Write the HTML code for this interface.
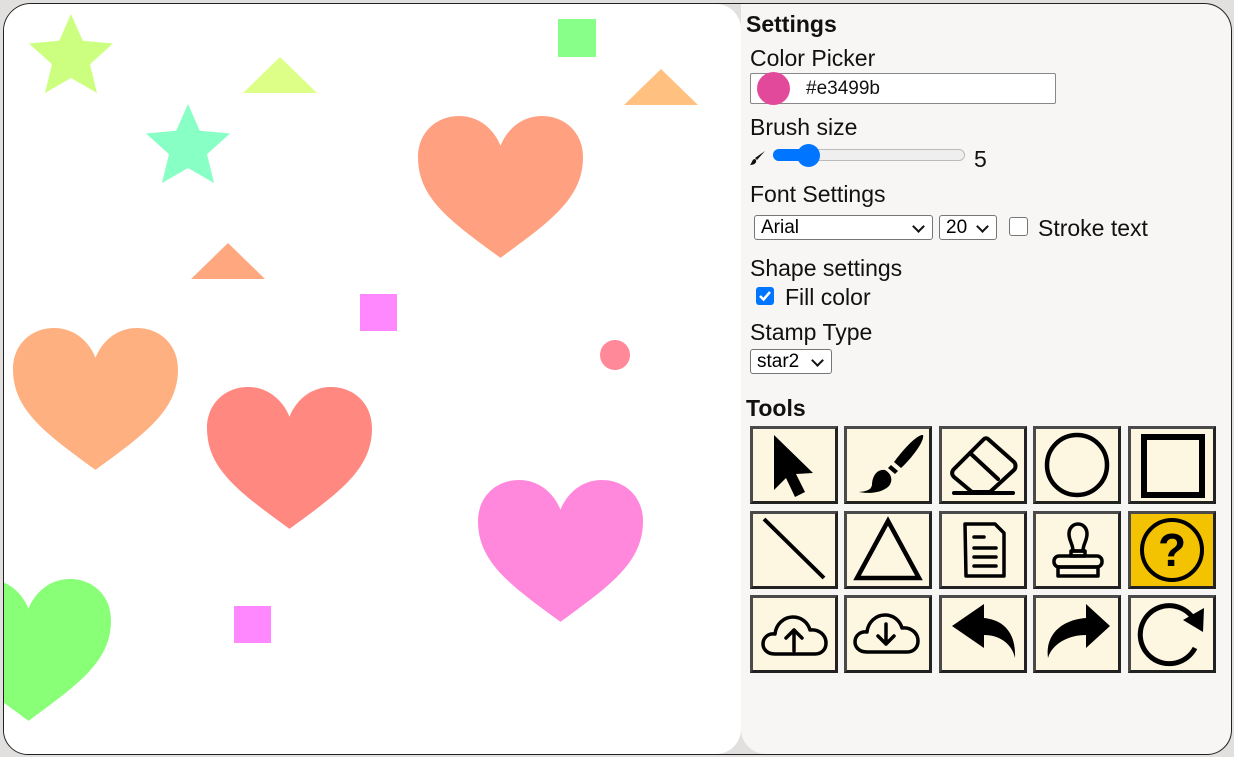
<!DOCTYPE html>
<html><head><meta charset="utf-8"><style>
*{box-sizing:border-box}
body{margin:0;width:1234px;height:757px;background:#e2dfdf;font-family:"Liberation Sans",sans-serif;overflow:hidden;position:relative}
#wrap{position:absolute;left:3px;top:3px;width:1229px;height:752px;border:1px solid #222;border-radius:28px 28px 25px 25px;background:#e2dfdf;overflow:hidden}
#cv{position:absolute;left:0;top:0;width:737px;height:750px;background:#fff;border-radius:0 25px 25px 0;overflow:hidden}
#pn{position:absolute;left:737px;top:0;width:490px;height:750px;background:#f7f6f4;border-radius:0 28px 25px 25px}
.t{position:absolute;font-size:23px;color:#111;white-space:nowrap;line-height:1}
.b{font-weight:bold}
.sel{position:absolute;border:1px solid #767676;border-radius:3px;background:#fff;font-size:19px;padding-left:6px;line-height:23px}
.sel:after{content:"";position:absolute;right:9px;top:6px;width:7px;height:7px;border-right:2px solid #111;border-bottom:2px solid #111;transform:rotate(45deg)}
.btn{position:absolute;width:88px;height:78px;background:#fdf6e0;border:3px solid #4a4a4a;border-right-color:#222;border-bottom-color:#222}
.btn svg{position:absolute;left:0;top:0;width:82px;height:72px}
</style></head><body>
<div id="wrap">
<div id="cv">
<svg width="737" height="750" viewBox="4 4 737 750" style="position:absolute;left:0;top:0">
<defs><path id="h" d="M50 86 C20 64 0 50 0 25 C0 10 11 0 25 0 C37 0 46 8 50 18 C54 8 63 0 75 0 C89 0 100 10 100 25 C100 50 80 64 50 86 Z"/>
<polygon id="s" points="0,-43 11.8,-16.2 42,-13.5 19,7.2 26,36 0,21 -26,36 -19,7.2 -42,-13.5 -11.8,-16.2"/></defs>
<use href="#s" transform="translate(71,57)" fill="#ccff80"/>
<use href="#s" transform="translate(188,147)" fill="#88ffc4"/>
<polygon points="243,93 280,57 317,93" fill="#ddff88"/>
<polygon points="624,105 661,69 698,105" fill="#ffc080"/>
<polygon points="191,279 228,243 265,279" fill="#ffa880"/>
<rect x="558" y="19" width="38" height="38" fill="#88ff88"/>
<rect x="360" y="294" width="37" height="37" fill="#ff88ff"/>
<rect x="234" y="606" width="37" height="37" fill="#ff88ff"/>
<circle cx="615" cy="355" r="15" fill="#ff8899"/>
<use href="#h" transform="translate(418,116) scale(1.65)" fill="#ffa080"/>
<use href="#h" transform="translate(13,328) scale(1.65)" fill="#ffb080"/>
<use href="#h" transform="translate(207,387) scale(1.65)" fill="#ff8880"/>
<use href="#h" transform="translate(478,480) scale(1.65)" fill="#ff88dd"/>
<use href="#h" transform="translate(-54,579) scale(1.65)" fill="#88ff77"/>
</svg>
</div>
<div id="pn"></div>
</div>

<div class="t b" style="left:746px;top:13px">Settings</div>
<div class="t" style="left:750px;top:47px">Color Picker</div>
<div style="position:absolute;left:750px;top:73px;width:306px;height:31px;border:1px solid #888;border-radius:2px;background:#fff"></div>
<div style="position:absolute;left:757px;top:72px;width:33px;height:33px;border-radius:50%;background:#e3499b"></div>
<div class="t" style="left:806px;top:79px;font-size:19px">#e3499b</div>
<div class="t" style="left:750px;top:116px">Brush size</div>
<svg style="position:absolute;left:750px;top:150px" width="16" height="16" viewBox="0 0 16 16"><path d="M15 1 L7 10 L5 8 Z" fill="#111"/><path d="M5 9 C2 9 2 13 0 15 C4 15 7 13 6 10 Z" fill="#111"/></svg>
<div style="position:absolute;left:773px;top:149px;width:192px;height:12px;border:1px solid #bbb;border-radius:6px;background:#efefef"></div>
<div style="position:absolute;left:773px;top:149px;width:36px;height:12px;border-radius:6px;background:#0075ff"></div>
<div style="position:absolute;left:797px;top:144px;width:23px;height:23px;border-radius:50%;background:#0075ff"></div>
<div class="t" style="left:974px;top:148px">5</div>
<div class="t" style="left:750px;top:183px">Font Settings</div>
<div class="sel" style="left:754px;top:215px;width:179px;height:25px">Arial</div>
<div class="sel" style="left:939px;top:215px;width:58px;height:25px">20</div>
<div style="position:absolute;left:1009px;top:217px;width:19px;height:19px;border:1px solid #767676;border-radius:3px;background:#fff"></div>
<div class="t" style="left:1038px;top:217px">Stroke text</div>
<div class="t" style="left:750px;top:257px">Shape settings</div>
<div style="position:absolute;left:756px;top:287px;width:18px;height:18px;border-radius:3px;background:#0075ff"><svg width="18" height="18"><path d="M4 9 L7.5 12.5 L14 5" stroke="#fff" stroke-width="2.5" fill="none"/></svg></div>
<div class="t" style="left:785px;top:286px">Fill color</div>
<div class="t" style="left:750px;top:321px">Stamp Type</div>
<div class="sel" style="left:750px;top:349px;width:82px;height:25px">star2</div>
<div class="t b" style="left:746px;top:397px">Tools</div>

<div class="btn" style="left:750px;top:426px"><svg viewBox="0 0 82 72"><path d="M21 6 L21 61 L33 49 L42 68 L52 63 L43 45 L60 44 Z" fill="#000"/></svg></div>
<div class="btn" style="left:844px;top:426px"><svg viewBox="0 0 82 72"><path d="M76 6 C70 5 55 22 47 33 L54 39 C64 30 78 12 76 6 Z" fill="#000"/><path d="M44 36 L51 42 L48 45 L41 39Z" fill="#000"/><path d="M38 41 C28 40 25 50 25 56 C24 60 22 62 12 63 C22 65 35 64 42 57 C46 52 45 45 38 41Z" fill="#000"/></svg></div>
<div class="btn" style="left:939px;top:426px"><svg viewBox="0 0 82 72" fill="none" stroke="#000" stroke-width="4" stroke-linejoin="round" stroke-linecap="round"><path d="M46 10 L72 33 C74 35 74 39 72 41 L48 63 L30 63 L12 48 C9 45 10 42 12 40 L42 10 C43 9 45 9 46 10 Z"/><path d="M28 24 L56 50"/><path d="M12 64 L71 64"/></svg></div>
<div class="btn" style="left:1033px;top:426px"><svg viewBox="0 0 82 72"><circle cx="41" cy="36" r="30" fill="none" stroke="#000" stroke-width="4.5"/></svg></div>
<div class="btn" style="left:1128px;top:426px"><svg viewBox="0 0 82 72"><rect x="13" y="8" width="58" height="58" fill="none" stroke="#000" stroke-width="6"/></svg></div>

<div class="btn" style="left:750px;top:511px"><svg viewBox="0 0 82 72"><path d="M11 5 L71 64" stroke="#000" stroke-width="4"/></svg></div>
<div class="btn" style="left:844px;top:511px"><svg viewBox="0 0 82 72"><path d="M41 7 L72 64 L10 64 Z" fill="none" stroke="#000" stroke-width="4.5"/></svg></div>
<div class="btn" style="left:939px;top:511px"><svg viewBox="0 0 82 72" fill="none" stroke="#000" stroke-width="3.5" stroke-linecap="round" stroke-linejoin="round"><path d="M23 10 L53 10 L62 19 L62 62 L24 62 Z"/><path d="M32 23 L42 23 M32 34 L54 34 M32 43 L54 43 M32 52 L54 52"/></svg></div>
<div class="btn" style="left:1033px;top:511px"><svg viewBox="0 0 82 72" fill="none" stroke="#000" stroke-width="3.5" stroke-linejoin="round"><path d="M37 37 C37 30 33 27 33 20 C33 14 37 10 42 10 C47 10 51 14 51 20 C51 27 47 30 47 37 Z"/><rect x="35" y="37" width="14" height="5"/><rect x="18" y="42" width="48" height="11" rx="5"/><rect x="22" y="53" width="40" height="9"/></svg></div>
<div class="btn" style="left:1128px;top:511px;background:#f3c200"><svg viewBox="0 0 82 72"><circle cx="41" cy="36" r="30" fill="none" stroke="#000" stroke-width="4"/><text x="41" y="52" text-anchor="middle" font-family="Liberation Sans" font-weight="bold" font-size="46">?</text></svg></div>

<div class="btn" style="left:750px;top:595px"><svg viewBox="0 0 82 72" fill="none" stroke="#000" stroke-width="3.5" stroke-linejoin="round" stroke-linecap="round"><path d="M22 56 C13 56 10 50 10 46 C10 40 15 35 22 36 C23 26 31 19 40 19 C49 19 55 25 57 32 C66 31 73 37 73 45 C73 52 68 56 62 56 Z"/><path d="M41 53 L41 32 M33 40 L41 32 L49 40"/></svg></div>
<div class="btn" style="left:844px;top:595px"><svg viewBox="0 0 82 72" fill="none" stroke="#000" stroke-width="3.5" stroke-linejoin="round" stroke-linecap="round"><path d="M20 54 C11 54 8 48 8 44 C8 38 13 33 20 34 C21 24 29 17 38 17 C47 17 53 23 55 30 C64 29 71 35 71 43 C71 50 66 54 60 54 Z"/><path d="M39 26 L39 46 M31 38 L39 46 L47 38"/></svg></div>
<div class="btn" style="left:939px;top:595px"><svg viewBox="0 0 82 72"><path d="M42 6 L10 28 L42 50 L42 37 C58 37 70 46 73 60 C74 35 62 22 42 20 Z" fill="#000"/></svg></div>
<div class="btn" style="left:1033px;top:595px"><svg viewBox="0 0 82 72"><path d="M50 6 L74 28 L50 50 L50 37 C32 37 16 46 12 60 C9 38 24 22 50 20 Z" fill="#000"/></svg></div>
<div class="btn" style="left:1128px;top:595px"><svg viewBox="0 0 82 72"><path d="M62 20 A29 29 0 1 0 64 50" fill="none" stroke="#000" stroke-width="5"/><path d="M73 10 L72 34 L52 22 Z" fill="#000"/></svg></div>
</body></html>
